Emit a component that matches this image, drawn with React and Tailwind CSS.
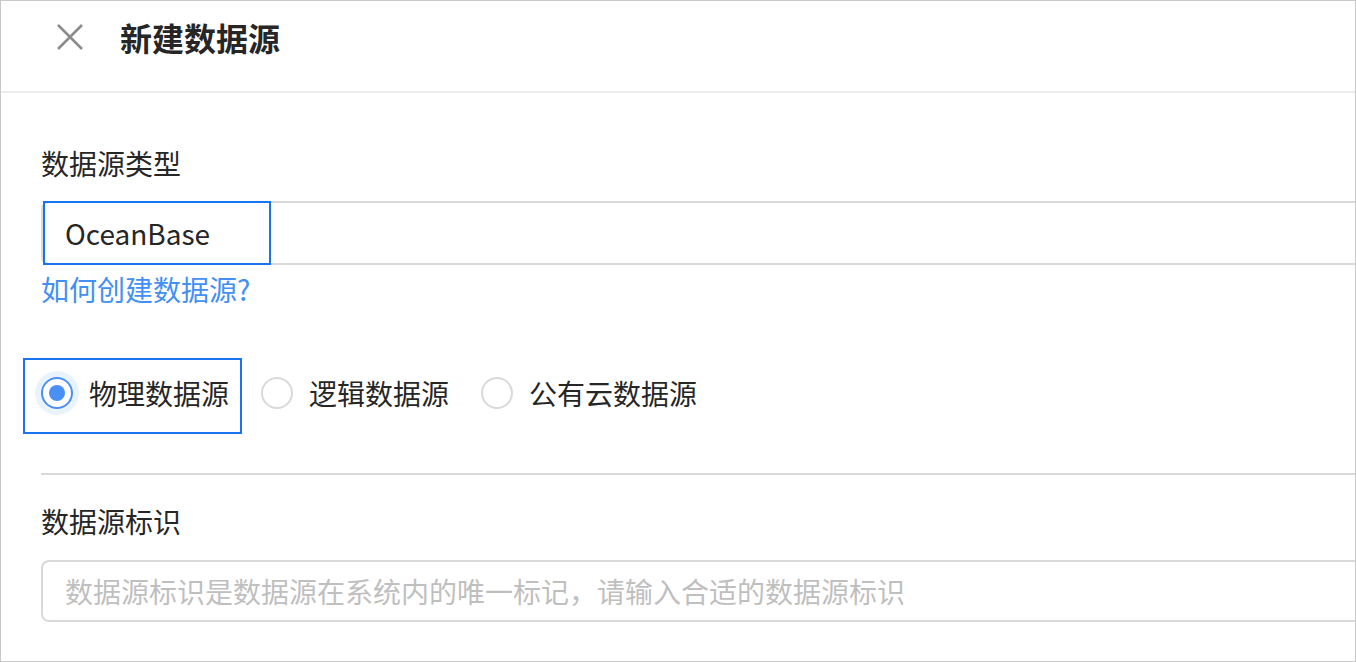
import React from 'react';

const Radio = ({ checked, label }) => (
  <div className="flex items-center gap-4">
    {checked ? (
      <span className="flex w-8 h-8 items-center justify-center rounded-full border-2 border-[#4a8ff5] shadow-[0_0_0_6px_#e8f3fe]">
        <span className="w-4 h-4 rounded-full bg-[#4a8ff5]" />
      </span>
    ) : (
      <span className="w-8 h-8 rounded-full border-2 border-[#d9d9d9]" />
    )}
    <span className="text-[28px] leading-[40px] text-[#262626]">{label}</span>
  </div>
);

export default function App() {
  return (
    <div
      className="w-[1356px] h-[662px] box-border border border-[#c8c8c8] bg-white overflow-hidden"
      style={{ fontFamily: '"Noto Sans CJK SC", "Noto Sans", sans-serif' }}
    >
      {/* Header */}
      <div className="h-[92px] flex items-start pt-[18px] pl-[56px] gap-[37px] border-b-2 border-[#ececec]">
        <svg width="26" height="26" viewBox="0 0 26 26" className="mt-[5px]">
          <path d="M1 1 L25 25 M25 1 L1 25" stroke="#8c8c8c" strokeWidth="2.6" fill="none" />
        </svg>
        <h1 className="text-[32px] leading-[36px] font-bold text-[#262626]">新建数据源</h1>
      </div>

      <div className="pl-[40px]">
        {/* 数据源类型 */}
        <div className="mt-[50px] text-[28px] leading-[40px] text-[#262626]">数据源类型</div>
        <div className="relative mt-[18px] h-[64px] w-[1340px] border-2 border-[#d9d9d9] rounded-l-[8px] flex items-center pl-[22px]">
          <span className="text-[28px] leading-[40px] text-[#262626]">OceanBase</span>
          <div className="absolute left-0 top-[-2px] w-[228px] h-[64px] border-2 border-[#1a73f0]" />
        </div>
        <div className="mt-[4px] text-[28px] leading-[40px] text-[#4190f2]">如何创建数据源?</div>

        {/* 单选 */}
        <div className="relative mt-[49px] h-[76px] pb-[6px] flex items-center gap-8">
          <div className="absolute left-[-18px] top-0 w-[219px] h-[76px] border-2 border-[#1a73f0]" />
          <Radio checked label="物理数据源" />
          <Radio label="逻辑数据源" />
          <Radio label="公有云数据源" />
        </div>

        <div className="mt-[39px] h-[2px] bg-[#d9d9d9]" />

        {/* 数据源标识 */}
        <div className="mt-[26px] text-[28px] leading-[40px] text-[#262626]">数据源标识</div>
        <div className="mt-[19px] h-[62px] w-[1340px] border-2 border-[#d9d9d9] rounded-l-[8px] flex items-center pl-[22px]">
          <span className="text-[28px] leading-[40px] text-[#bfbfbf]">
            数据源标识是数据源在系统内的唯一标记，请输入合适的数据源标识
          </span>
        </div>
      </div>
    </div>
  );
}
